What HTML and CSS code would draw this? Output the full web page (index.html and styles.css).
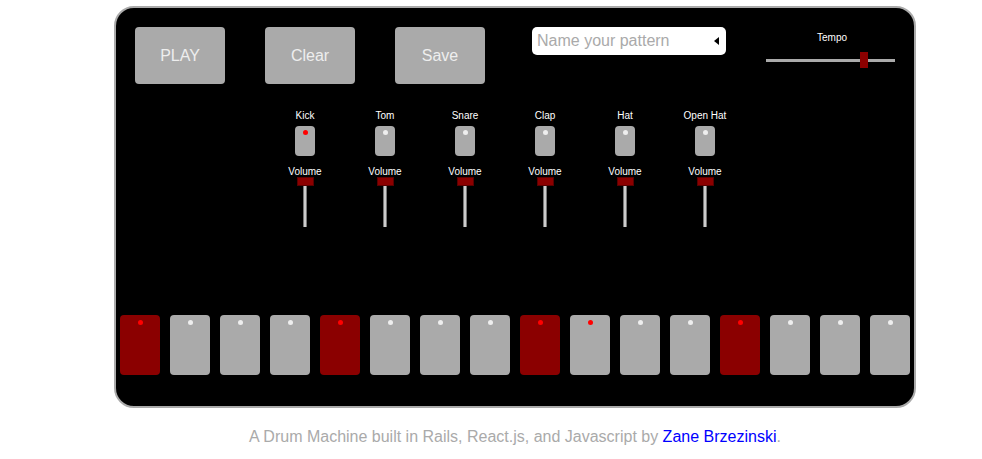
FILE: index.html
```html
<!DOCTYPE html>
<html>
<head>
<meta charset="utf-8">
<title>Drum Machine</title>
<link rel="stylesheet" href="styles.css">
</head>
<body>
<div class="page">
  <div class="machine">
    <div class="top-row">
      <button class="btn">PLAY</button>
      <button class="btn">Clear</button>
      <button class="btn">Save</button>
      <div class="name-box">
        <input class="name-input" type="text" placeholder="Name your pattern">
        <svg class="name-arrow" width="5" height="8" viewBox="0 0 5 8"><polygon points="5,0 5,8 0,4" fill="#000"/></svg>
      </div>
      <div class="tempo">
        <div class="tempo-label">Tempo</div>
        <div class="hslider">
          <div class="hslider-track"></div>
          <div class="hslider-thumb" style="left: 94px"></div>
        </div>
      </div>
    </div>

    <div class="instruments">
      <div class="inst">
        <div class="inst-label">Kick</div>
        <div class="inst-btn"><span class="dot dot-red"></span></div>
        <div class="inst-label vol-label">Volume</div>
        <div class="vslider"><div class="vslider-thumb"></div><div class="vslider-track"></div></div>
      </div>
      <div class="inst">
        <div class="inst-label">Tom</div>
        <div class="inst-btn"><span class="dot"></span></div>
        <div class="inst-label vol-label">Volume</div>
        <div class="vslider"><div class="vslider-thumb"></div><div class="vslider-track"></div></div>
      </div>
      <div class="inst">
        <div class="inst-label">Snare</div>
        <div class="inst-btn"><span class="dot"></span></div>
        <div class="inst-label vol-label">Volume</div>
        <div class="vslider"><div class="vslider-thumb"></div><div class="vslider-track"></div></div>
      </div>
      <div class="inst">
        <div class="inst-label">Clap</div>
        <div class="inst-btn"><span class="dot"></span></div>
        <div class="inst-label vol-label">Volume</div>
        <div class="vslider"><div class="vslider-thumb"></div><div class="vslider-track"></div></div>
      </div>
      <div class="inst">
        <div class="inst-label">Hat</div>
        <div class="inst-btn"><span class="dot"></span></div>
        <div class="inst-label vol-label">Volume</div>
        <div class="vslider"><div class="vslider-thumb"></div><div class="vslider-track"></div></div>
      </div>
      <div class="inst">
        <div class="inst-label">Open Hat</div>
        <div class="inst-btn"><span class="dot"></span></div>
        <div class="inst-label vol-label">Volume</div>
        <div class="vslider"><div class="vslider-thumb"></div><div class="vslider-track"></div></div>
      </div>
    </div>

    <div class="pads">
      <div class="pad pad-on"><span class="dot dot-red"></span></div>
      <div class="pad"><span class="dot"></span></div>
      <div class="pad"><span class="dot"></span></div>
      <div class="pad"><span class="dot"></span></div>
      <div class="pad pad-on"><span class="dot dot-red"></span></div>
      <div class="pad"><span class="dot"></span></div>
      <div class="pad"><span class="dot"></span></div>
      <div class="pad"><span class="dot"></span></div>
      <div class="pad pad-on"><span class="dot dot-red"></span></div>
      <div class="pad"><span class="dot dot-red"></span></div>
      <div class="pad"><span class="dot"></span></div>
      <div class="pad"><span class="dot"></span></div>
      <div class="pad pad-on"><span class="dot dot-red"></span></div>
      <div class="pad"><span class="dot"></span></div>
      <div class="pad"><span class="dot"></span></div>
      <div class="pad"><span class="dot"></span></div>
    </div>
  </div>
  <p class="footer">A Drum Machine built in Rails, React.js, and Javascript by <a href="#">Zane Brzezinski</a>.</p>
</div>
</body>
</html>
```

FILE: styles.css
```css
* {
  box-sizing: border-box;
}

html, body {
  margin: 0;
  padding: 0;
  background: #fff;
  font-family: "Liberation Sans", Arial, Helvetica, sans-serif;
}

.page {
  width: 802px;
  margin-left: 114px;
  padding-top: 6px;
}

.machine {
  background: #000;
  border: 2px solid #aaa;
  border-radius: 20px;
  padding: 19px 4px 31px 4px;
  display: flex;
  flex-direction: column;
}

.top-row {
  display: flex;
  align-items: flex-start;
  padding-left: 15px;
  height: 57px;
}

.btn {
  width: 90px;
  height: 57px;
  margin-right: 40px;
  border: none;
  border-radius: 4px;
  background: #aaa;
  color: #eee;
  font-family: "Liberation Sans", Arial, Helvetica, sans-serif;
  font-size: 16px;
  padding: 0;
}

.btn:nth-child(3) {
  margin-right: 47px;
}

.name-box {
  width: 194px;
  height: 28px;
  background: #fff;
  border-radius: 5px;
  display: flex;
  align-items: center;
  padding: 0 7px 0 5px;
}

.name-input {
  flex: 1;
  min-width: 0;
  border: none;
  outline: none;
  background: transparent;
  font-family: "Liberation Sans", Arial, Helvetica, sans-serif;
  font-size: 16px;
  padding: 0;
  color: #333;
}

.name-input::placeholder {
  color: #aaa;
}

.name-arrow {
  display: block;
  flex: none;
}

.tempo {
  width: 130px;
  margin-left: 40px;
  display: flex;
  flex-direction: column;
  align-items: center;
  padding-top: 6px;
}

.tempo-label {
  color: #fff;
  font-size: 10px;
  line-height: 10px;
  padding-left: 2px;
}

.hslider {
  position: relative;
  width: 130px;
  height: 16px;
  margin-top: 9px;
  display: flex;
  align-items: center;
}

.hslider-track {
  width: 129px;
  height: 3px;
  background: #aaa;
}

.hslider-thumb {
  position: absolute;
  top: 0;
  width: 8px;
  height: 16px;
  background: #8b0000;
}

.instruments {
  display: flex;
  margin-top: 27px;
  margin-left: 145px;
}

.inst {
  width: 80px;
  display: flex;
  flex-direction: column;
  align-items: center;
}

.inst-label {
  color: #fff;
  font-size: 10px;
  line-height: 10px;
  white-space: nowrap;
}

.inst-btn {
  width: 20px;
  height: 30px;
  margin-top: 5px;
  background: #aaa;
  border-radius: 4px;
  display: flex;
  justify-content: center;
  padding-top: 4px;
}

.vol-label {
  margin-top: 11px;
}

.vslider {
  display: flex;
  flex-direction: column;
  align-items: center;
}

.vslider-thumb {
  width: 17px;
  height: 9px;
  background: #8b0000;
  border: 1px solid #5a0000;
}

.vslider-track {
  width: 4px;
  height: 41px;
  background: linear-gradient(to right, #777 0, #777 1px, #ccc 1px, #ccc 3px, #777 3px);
}

.dot {
  display: block;
  width: 5px;
  height: 5px;
  border-radius: 50%;
  background: #eee;
}

.dot-red {
  background: #f00;
}

.pads {
  display: flex;
  gap: 10px;
  margin-top: 88px;
}

.pad {
  width: 40px;
  height: 60px;
  background: #aaa;
  border-radius: 4px;
  display: flex;
  justify-content: center;
  padding-top: 5px;
}

.pad-on {
  background: #8b0000;
}

.footer {
  margin: 20px 0 0 0;
  text-align: center;
  color: #aaa;
  font-size: 16px;
  line-height: 18px;
}

.footer a {
  color: #00f;
  text-decoration: none;
}
```
